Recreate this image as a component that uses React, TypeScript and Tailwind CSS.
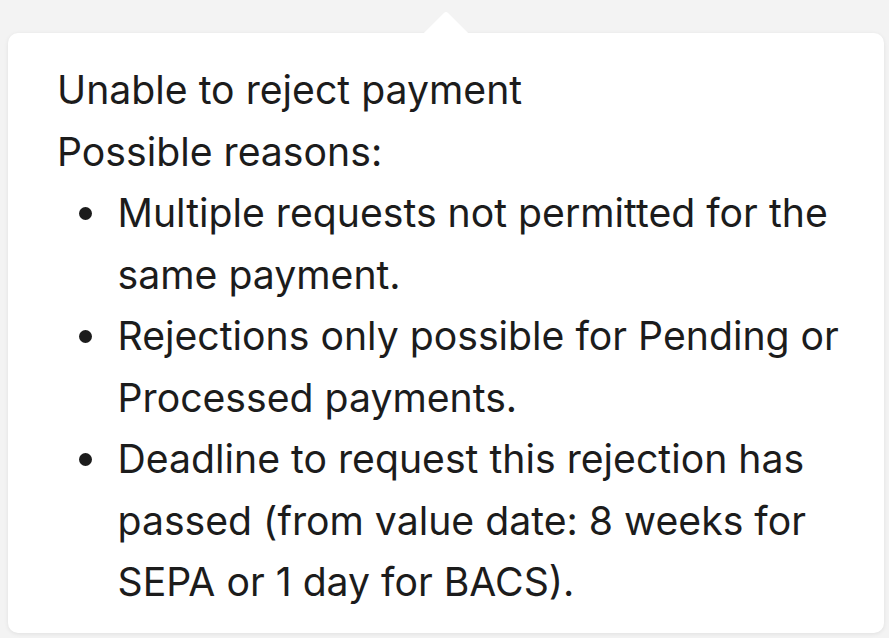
export default function App() {
  const reasons = [
    'Multiple requests not permitted for the same payment.',
    'Rejections only possible for Pending or Processed payments.',
    'Deadline to request this rejection has passed (from value date: 8 weeks for SEPA or 1 day for BACS).',
  ]

  return (
    <div className="min-h-screen bg-[#f3f3f3] px-2 pt-[10px] font-['Inter',sans-serif]">
      <div className="relative">
        {/* arrow */}
        <div className="ml-[407px] h-[23px] w-[62px] overflow-hidden">
          <div className="mx-auto mt-[10px] h-[44px] w-[44px] rotate-45 rounded-[3px] bg-white" />
        </div>
        <div className="w-[876px] rounded-[10px] bg-white pl-[49px] pr-8 pt-[26px] pb-[20px] text-[39.2px] leading-[61.5px] text-[#1c1c1c] shadow-[0_1px_4px_rgba(0,0,0,0.08)]">
          <p>Unable to reject payment</p>
          <p>Possible reasons:</p>
          <ul className="pl-[22px]">
            {reasons.map((r) => (
              <li key={r} className="flex">
                <span className="flex h-[61.5px] w-[38.5px] shrink-0 items-center pt-[1px]">
                  <span className="h-[12.5px] w-[12.5px] rounded-full bg-[#1c1c1c]" />
                </span>
                <span>{r}</span>
              </li>
            ))}
          </ul>
        </div>
      </div>
    </div>
  )
}
